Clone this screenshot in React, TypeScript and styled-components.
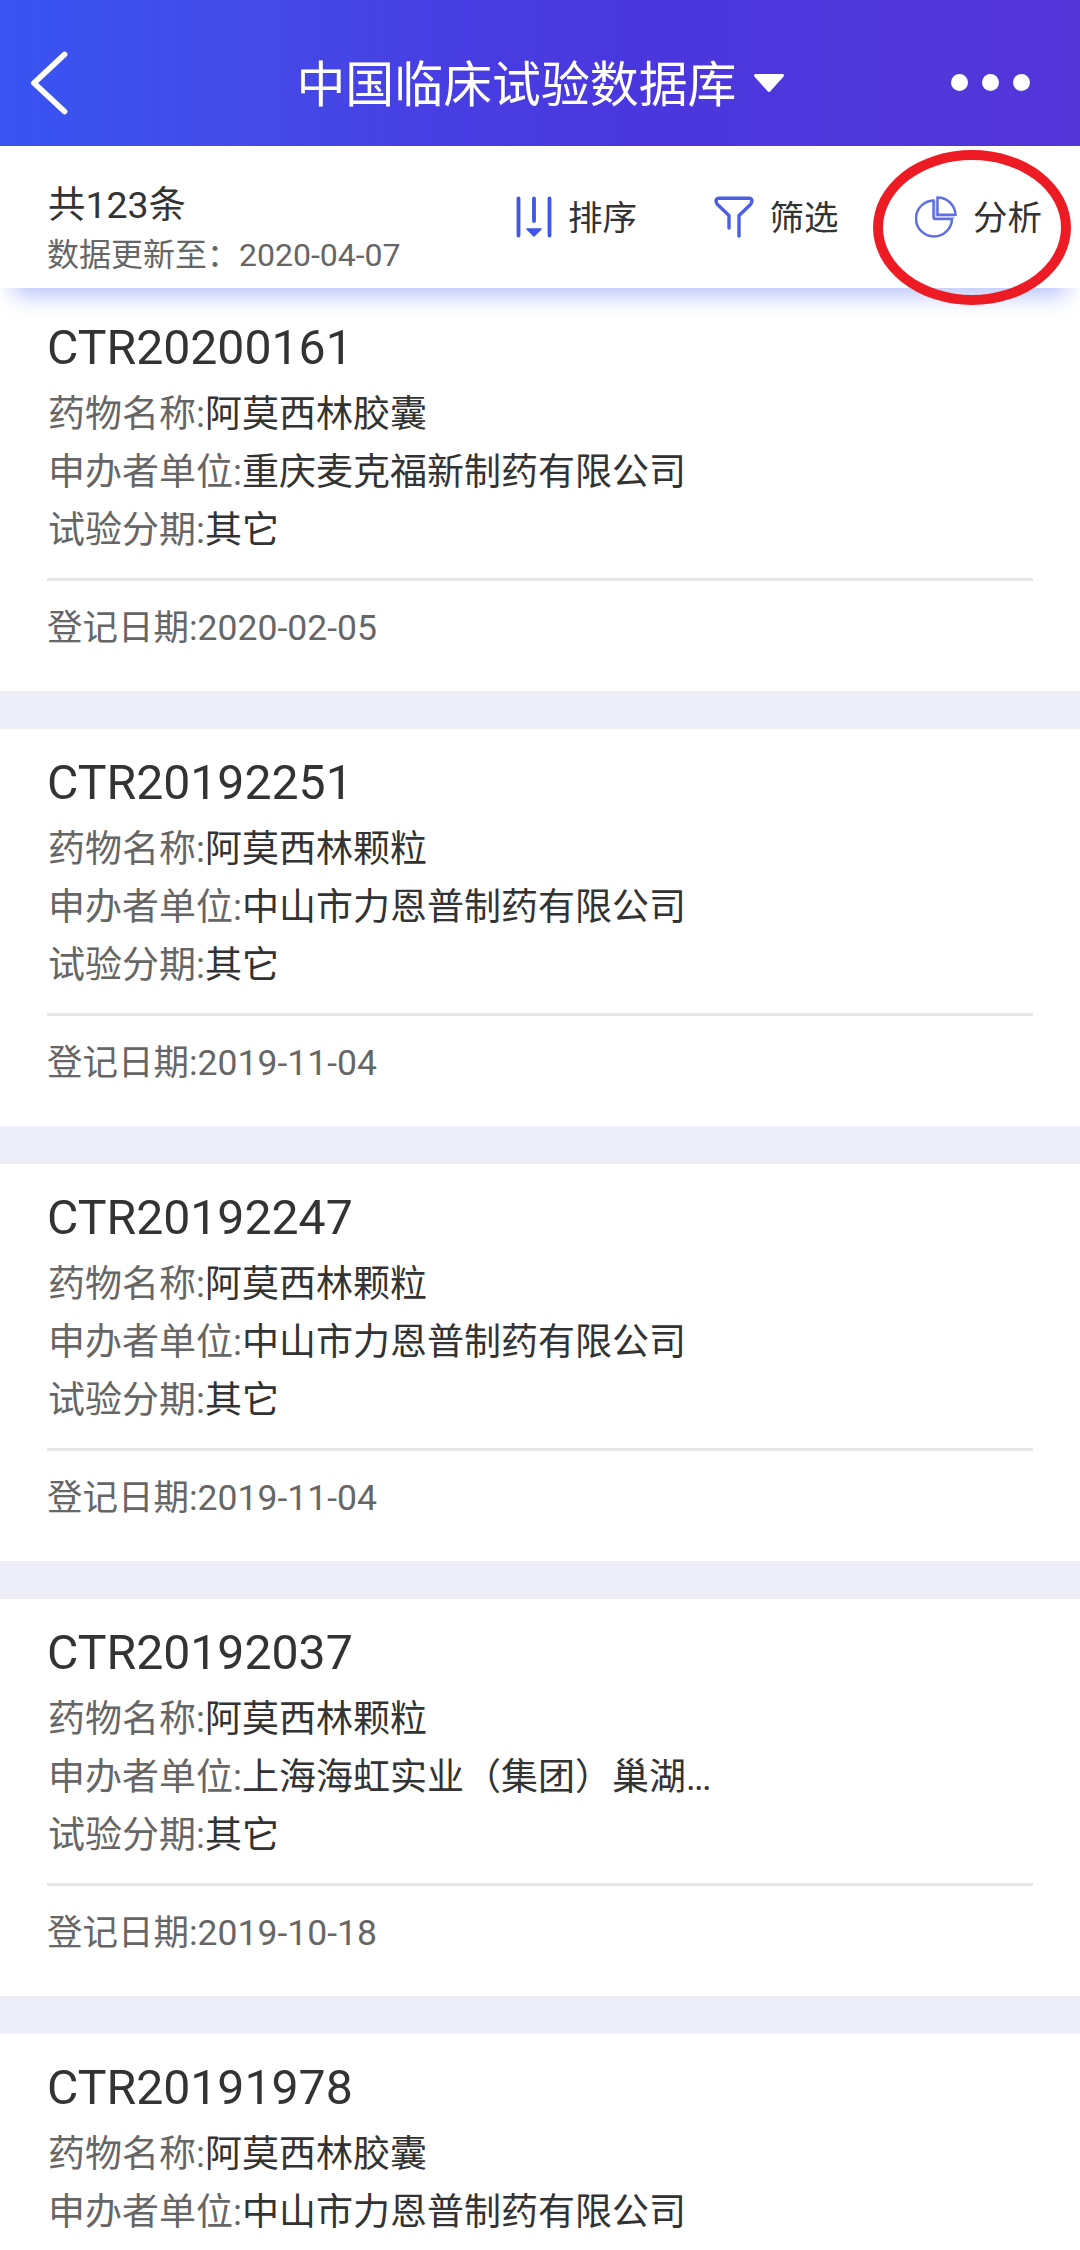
import React from 'react';
import styled, { createGlobalStyle } from 'styled-components';

const GlobalStyle = createGlobalStyle`
  * { box-sizing: border-box; }
  body {
    margin: 0;
    background: #fff;
    font-family: Roboto, "Noto Sans CJK SC", sans-serif;
    color: #333;
  }
`;

const Screen = styled.div`
  width: 1080px;
  height: 2250px;
  overflow: hidden;
  display: flex;
  flex-direction: column;
  background: #fff;
`;

const Header = styled.header`
  flex: none;
  height: 146px;
  padding: 19px 29px 0 30px;
  display: grid;
  grid-template-columns: 1fr auto 1fr;
  align-items: center;
  background: linear-gradient(90deg, #3854f2 0%, #434be8 22%, #473fe3 40%, #4a37dd 60%, #5037dc 80%, #5335d8 100%);
`;

const HeaderTitle = styled.h1`
  margin: 0;
  display: flex;
  align-items: center;
  gap: 16px;
  font-size: 48.9px;
  line-height: 70px;
  font-weight: 400;
  color: #fff;
`;

const TitleText = styled.span`
  padding-top: 7px;
`;

const Dots = styled.div`
  display: flex;
  justify-content: flex-end;
  gap: 13.5px;
  padding-right: 21px;
`;

const Dot = styled.span`
  width: 17.5px;
  height: 17.5px;
  border-radius: 50%;
  background: #fff;
`;

const Toolbar = styled.section`
  flex: none;
  position: relative;
  z-index: 1;
  height: 142px;
  padding: 0 38px 0 47px;
  display: flex;
  justify-content: space-between;
  background: #fff;
  box-shadow: 0 22px 20px -14px rgba(60, 95, 240, 0.36);
`;

const Summary = styled.div`
  padding-top: 33px;
`;

const Total = styled.div`
  padding-left: 1px;
  font-size: 37.4px;
  line-height: 52px;
`;

const Updated = styled.div`
  font-size: 32px;
  line-height: 49px;
  color: #666;
`;

const Actions = styled.div`
  display: flex;
  height: 141px;
  gap: 76.5px;
`;

const Action = styled.button`
  display: flex;
  align-items: center;
  gap: 16px;
  padding: 0;
  border: 0;
  background: none;
  font: inherit;
  font-size: 34.5px;
  color: #333;
`;

const ActionLabel = styled.span`
  padding-bottom: 3px;
`;

const Highlight = styled.div`
  position: absolute;
  left: 873px;
  top: 4px;
  width: 198px;
  height: 155px;
  border: 10.5px solid #ed1c24;
  border-radius: 50%;
`;

const List = styled.main`
  display: flex;
  flex-direction: column;
  gap: 38px;
  background: #eeeef8;
`;

const Card = styled.article<{ $first?: boolean }>`
  flex: none;
  height: ${(p) => (p.$first ? 403 : 397)}px;
  padding: ${(p) => (p.$first ? 25 : 19)}px 47px 0;
  background: #fff;
`;

const Code = styled.h2`
  margin: 0;
  font-size: 48.2px;
  font-weight: 400;
  line-height: 70px;
`;

const Fields = styled.div`
  padding: 3px 0 0 1px;
`;

const Field = styled.div`
  font-size: 37px;
  line-height: 58px;
  white-space: nowrap;
`;

const Label = styled.span`
  color: #666;
`;

const Ellipsis = styled.span`
  letter-spacing: -1.8px;
`;

const Registered = styled.div`
  margin-top: 18px;
  padding-top: 21px;
  border-top: 3px solid #e6e6e6;
  font-size: 35.5px;
  line-height: 52px;
  color: #666;
`;

const BackIcon = () => (
  <svg width="38" height="64" viewBox="0 0 38 64" fill="none" stroke="#fff" strokeWidth="5.8" strokeLinecap="round" strokeLinejoin="round">
    <path d="M34.500 3.500 4 32l30.500 28.500" />
  </svg>
);

const CaretIcon = () => (
  <svg width="32" height="20" viewBox="0 0 32 20">
    <path d="M2.5 2.5h27L16 17.5z" fill="#fff" stroke="#fff" strokeWidth="3" strokeLinejoin="round" />
  </svg>
);

const SortIcon = () => (
  <svg width="36" height="42" viewBox="0 0 36 42" fill="none" stroke="#3f57ea" strokeWidth="3.8" strokeLinecap="round">
    <path d="M2.5 2.400v37.200M18 2.400v22.600M33.500 2.400v37.200" />
    <path d="M11 33h14l-7 7z" fill="#3f57ea" strokeWidth="1.6" strokeLinejoin="round" />
  </svg>
);

const FilterIcon = () => (
  <svg width="40" height="42" viewBox="0 0 40 42" fill="none" stroke="#4a5fe6" strokeWidth="3.4" strokeLinecap="round" strokeLinejoin="round">
    <path d="M15 32V19.500L3.500 8.500C1 5.500 2 2.200 5 2.200h30c3 0 4 3.300 1.500 6.300L25 19.500V40" />
  </svg>
);

const PieIcon = () => (
  <svg width="42" height="42" viewBox="0 0 42 42" fill="none" stroke="#5f70e2" strokeWidth="2.5">
    <path d="M20.500 4.500v16.500h19" stroke="#ccd3f7" strokeWidth="4" />
    <path d="M18.500 4.500a18 18 0 1 0 18.500 18.500H20.500q-2 0-2-2z" />
    <path d="M22.500 1.500v17.200h18A18 18 0 0 0 22.500 1.500z" />
  </svg>
);

interface Trial {
  code: string;
  drug: string;
  sponsor: string;
  truncated?: boolean;
  phase?: string;
  date?: string;
}

const trials: Trial[] = [
  { code: 'CTR20200161', drug: '阿莫西林胶囊', sponsor: '重庆麦克福新制药有限公司', phase: '其它', date: '2020-02-05' },
  { code: 'CTR20192251', drug: '阿莫西林颗粒', sponsor: '中山市力恩普制药有限公司', phase: '其它', date: '2019-11-04' },
  { code: 'CTR20192247', drug: '阿莫西林颗粒', sponsor: '中山市力恩普制药有限公司', phase: '其它', date: '2019-11-04' },
  { code: 'CTR20192037', drug: '阿莫西林颗粒', sponsor: '上海海虹实业（集团）巢湖', truncated: true, phase: '其它', date: '2019-10-18' },
  { code: 'CTR20191978', drug: '阿莫西林胶囊', sponsor: '中山市力恩普制药有限公司' },
];

export default function App() {
  return (
    <Screen>
      <GlobalStyle />
      <Header>
        <BackIcon />
        <HeaderTitle>
          <TitleText>中国临床试验数据库</TitleText>
          <CaretIcon />
        </HeaderTitle>
        <Dots>
          <Dot />
          <Dot />
          <Dot />
        </Dots>
      </Header>
      <Toolbar>
        <Summary>
          <Total>共123条</Total>
          <Updated>数据更新至：2020-04-07</Updated>
        </Summary>
        <Actions>
          <Action><SortIcon /><ActionLabel>排序</ActionLabel></Action>
          <Action><FilterIcon /><ActionLabel>筛选</ActionLabel></Action>
          <Action><PieIcon /><ActionLabel>分析</ActionLabel></Action>
        </Actions>
        <Highlight />
      </Toolbar>
      <List>
        {trials.map((t, i) => (
          <Card key={t.code} $first={i === 0}>
            <Code>{t.code}</Code>
            <Fields>
              <Field><Label>药物名称:</Label>{t.drug}</Field>
              <Field>
                <Label>申办者单位:</Label>{t.sponsor}
                {t.truncated && <Ellipsis>...</Ellipsis>}
              </Field>
              {t.phase && <Field><Label>试验分期:</Label>{t.phase}</Field>}
            </Fields>
            {t.date && <Registered>登记日期:{t.date}</Registered>}
          </Card>
        ))}
      </List>
    </Screen>
  );
}
